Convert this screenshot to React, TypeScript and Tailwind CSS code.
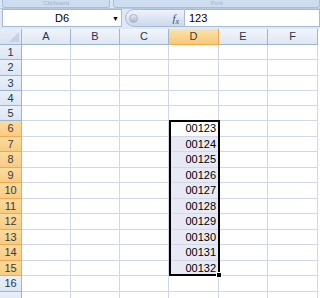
import React from "react";

const cols = ["A", "B", "C", "D", "E", "F"];
const colW = ["w-[49px]", "w-[49px]", "w-[49px]", "w-[50px]", "w-[49px]", "w-[50px]"];
const rowH = [15, 16, 15, 15, 15, 16, 15, 16, 15, 16, 15, 16, 15, 16, 15, 16, 15];
const values: Record<number, string> = {
  6: "00123", 7: "00124", 8: "00125", 9: "00126", 10: "00127",
  11: "00128", 12: "00129", 13: "00130", 14: "00131", 15: "00132",
};

export default function App() {
  const font = { fontFamily: '"Liberation Sans", Arial, sans-serif' };
  return (
    <div className="w-[320px] h-[298px] overflow-hidden bg-white text-[11px] text-[#222]" style={font}>
      {/* ribbon remnant */}
      <div className="h-[9px] bg-[#dbe6f4] border-b border-[#b5c9e2] flex">
        <div className="ml-[2px] w-[118px] h-[8px] bg-[#cddcef] border-x border-b border-[#a9bfd9] rounded-b-[3px] flex justify-center items-center overflow-hidden">
          <span className="text-[6px] leading-[7px] text-[#9fb2cb]">Clipboard</span>
        </div>
        <div className="ml-[3px] w-[225px] h-[8px] bg-[#cddcef] border-x border-b border-[#a9bfd9] rounded-b-[3px] flex justify-center items-center overflow-hidden">
          <span className="text-[6px] leading-[7px] text-[#9fb2cb]">Font</span>
        </div>
      </div>
      {/* formula bar */}
      <div className="h-[20px] bg-[#dfe9f5] flex items-start">
        <div className="ml-[2px] w-[120px] h-[18px] bg-white border border-[#a7bad3] flex items-center relative">
          <span className="flex-1 text-center text-[11px] text-black">D6</span>
          <span className="absolute right-[2px] top-[4px] text-[7px] text-black">▼</span>
        </div>
        <div className="ml-[3px] w-[60px] h-[18px] rounded-l-[9px] bg-gradient-to-b from-[#eef3fa] to-[#cbd9ec] border border-[#a7bad3] flex items-center">
          <span className="ml-[3px] w-[9px] h-[9px] rounded-full bg-gradient-to-b from-[#e8ecf1] to-[#a9b4c2] border border-[#aab5c4]" />
          <span className="ml-auto mr-[5px] text-[11px] italic text-[#3b4b5e]" style={{ fontFamily: '"Liberation Serif", serif' }}>
            f<sub className="text-[8px]">x</sub>
          </span>
        </div>
        <div className="flex-1 h-[18px] bg-white border border-[#a7bad3] border-l-0 flex items-center pl-[4px] text-black">
          123
        </div>
      </div>
      {/* grid */}
      <div className="relative">
        {/* column header */}
        <div className="flex h-[16px]">
          <div className="w-[22px] shrink-0 bg-gradient-to-b from-[#e7eef8] to-[#d6e2f2] border-r border-b border-[#9eb6ce] flex items-end justify-end p-[2px]">
            <svg width="10" height="10" viewBox="0 0 10 10">
              <polygon points="10,0 10,10 0,10" fill="#c3d2e6" />
            </svg>
          </div>
          {cols.map((c, i) => (
            <div
              key={c}
              className={`${colW[i]} shrink-0 flex items-center justify-center border-r border-b ${
                c === "D"
                  ? "bg-gradient-to-b from-[#fbe3a9] to-[#f7c97a] border-[#f2a950] text-[#3b3b3b]"
                  : "bg-gradient-to-b from-[#f1f5fb] to-[#dde7f4] border-[#9eb6ce] text-[#27344a]"
              }`}
            >
              {c}
            </div>
          ))}
        </div>
        {/* rows */}
        {rowH.map((h, ri) => {
          const r = ri + 1;
          const sel = r >= 6 && r <= 15;
          return (
            <div key={r} className={`flex ${h === 15 ? "h-[15px]" : "h-[16px]"}`}>
              <div
                className={`w-[22px] shrink-0 flex items-center justify-center border-r border-b ${
                  sel
                    ? "bg-gradient-to-b from-[#fbdca0] to-[#f8cb82] border-[#f2a950] text-[#3b3b3b]"
                    : "bg-gradient-to-b from-[#eaf0f9] to-[#dce6f3] border-[#9eb6ce] text-[#27344a]"
                }`}
              >
                {r <= 16 ? r : null}
              </div>
              {cols.map((c, i) => {
                const inSel = c === "D" && sel;
                return (
                  <div
                    key={c}
                    className={`${colW[i]} shrink-0 border-r border-b border-[#d0d7e5] ${
                      inSel && r !== 6 ? "bg-[#e7eaf5]" : "bg-white"
                    } flex items-center justify-end pr-[2px] text-black`}
                  >
                    {inSel ? values[r] : null}
                  </div>
                );
              })}
            </div>
          );
        })}
        {/* selection border */}
        <div className="absolute left-[169px] top-[91px] w-[51px] h-[156px] border-2 border-black pointer-events-none" />
        <div className="absolute left-[216px] top-[243px] w-[6px] h-[6px] bg-black border border-white pointer-events-none" />
      </div>
    </div>
  );
}
